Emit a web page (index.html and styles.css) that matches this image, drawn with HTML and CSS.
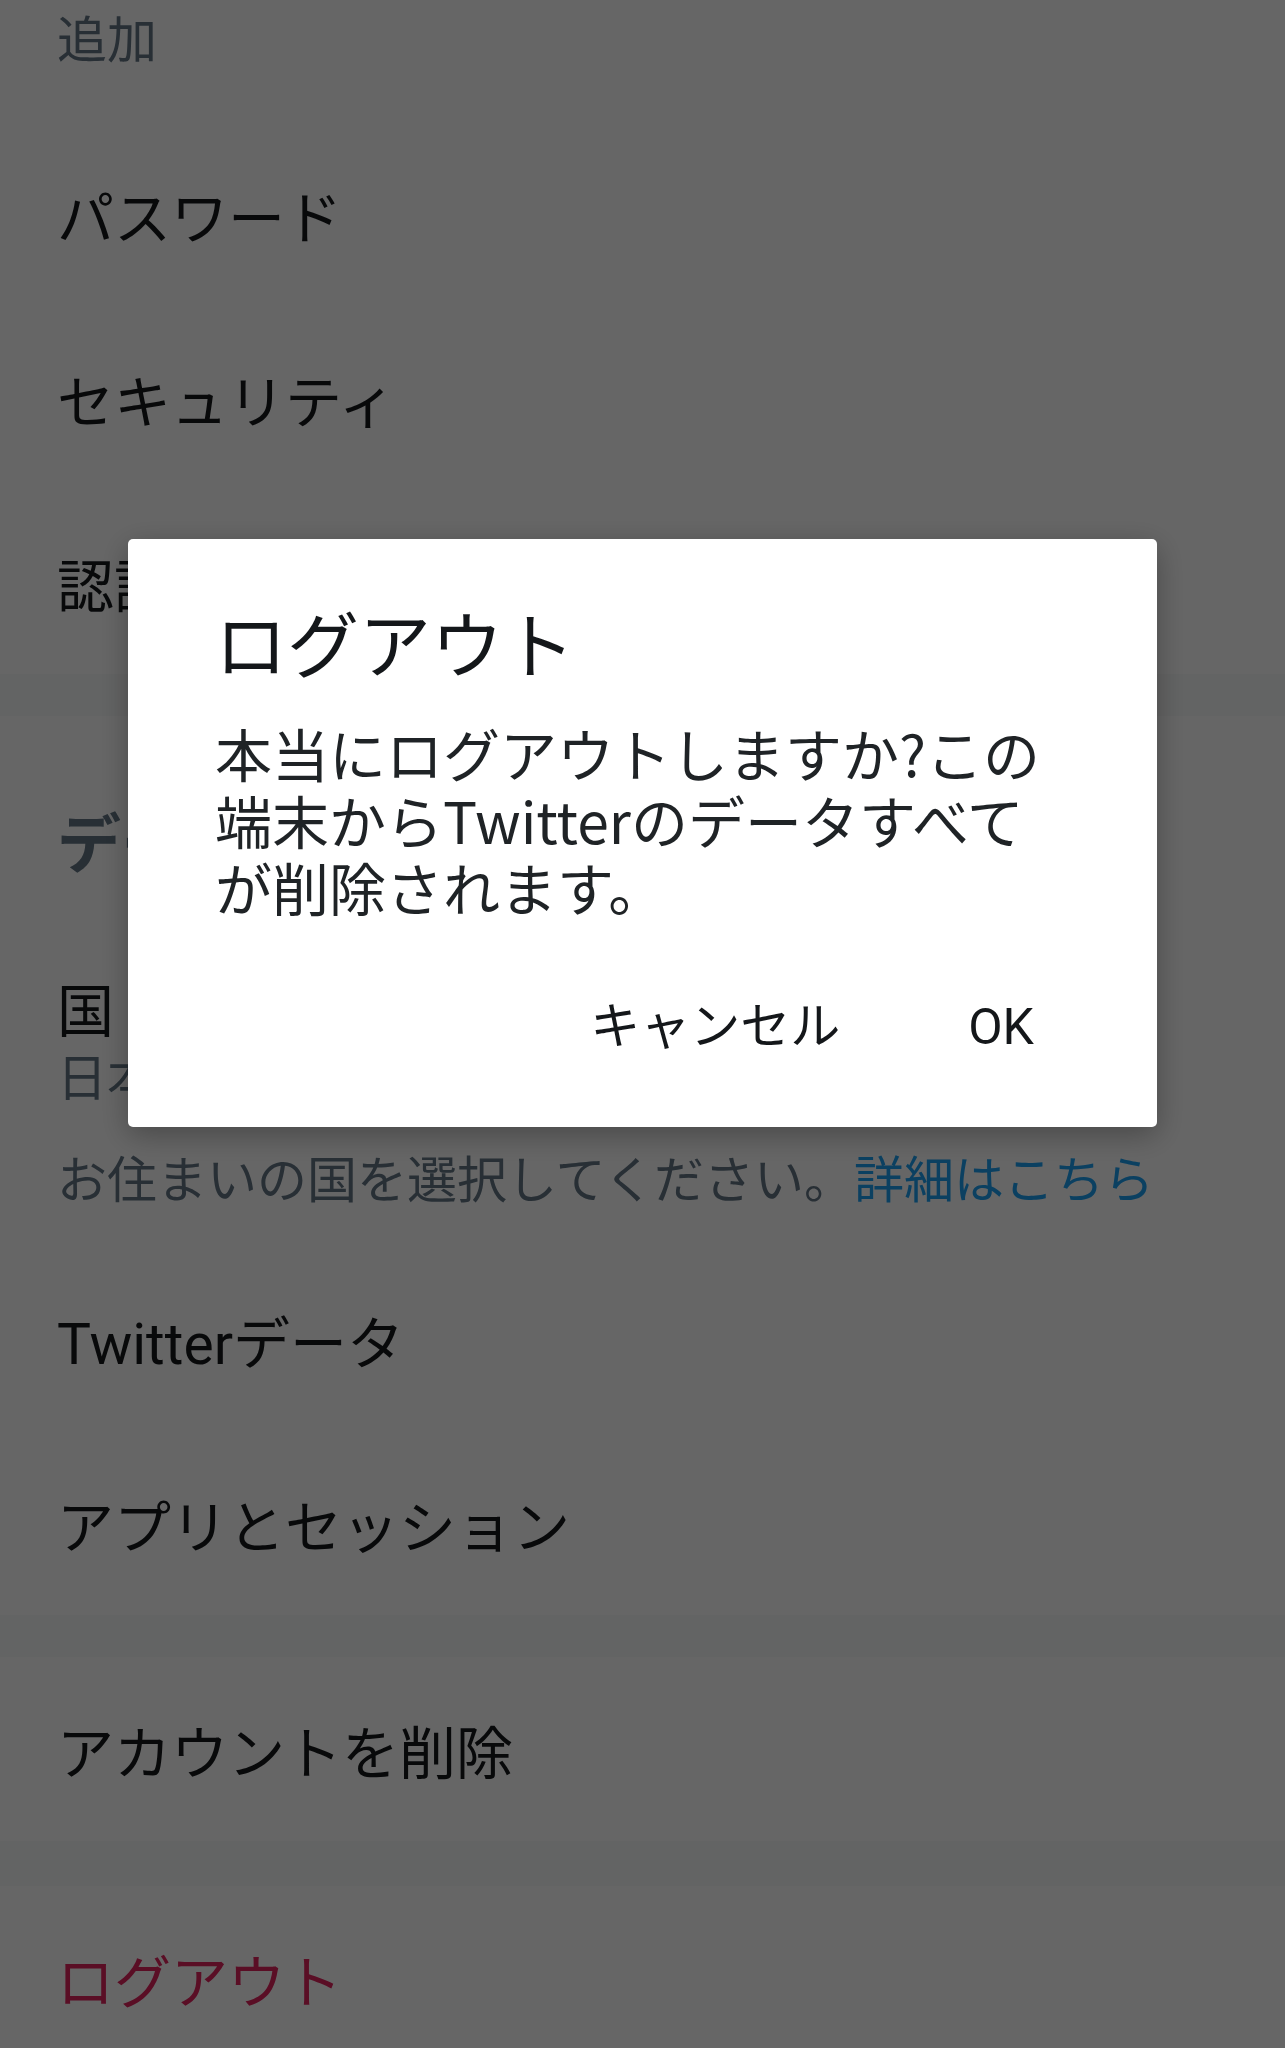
FILE: index.html
```html
<!DOCTYPE html>
<html lang="ja">

<head>
    <meta charset="UTF-8" />
    <meta name="viewport" content="width=device-width, initial-scale=1.0" />
    <title>アカウント</title>
    <link rel="stylesheet" href="styles.css">
</head>

<body>
    <div class="settings">
        <div class="row row-tail"><div class="sub">追加</div></div>
        <div class="row">パスワード</div>
        <div class="row">セキュリティ</div>
        <div class="row">認証済みアカウント</div>

        <div class="divider"></div>
        <h2 class="section">データと許可</h2>

        <div class="row row-two">
            <div class="title">国</div>
            <div class="sub">日本</div>
        </div>
        <p class="note">お住まいの国を選択してください。<a href="#">詳細はこちら</a></p>
        <div class="row">Twitterデータ</div>
        <div class="row">アプリとセッション</div>

        <div class="divider"></div>
        <div class="row">アカウントを削除</div>

        <div class="divider divider-last"></div>
        <div class="row danger">ログアウト</div>
    </div>

    <div class="overlay">
        <div class="dialog">
            <h1>ログアウト</h1>
            <p>本当にログアウトしますか?この端末からTwitterのデータすべてが削除されます。</p>
            <div class="actions">
                <button>キャンセル</button>
                <button>OK</button>
            </div>
        </div>
    </div>
</body>

</html>
```

FILE: styles.css
```css
* {
    box-sizing: border-box;
    margin: 0;
    padding: 0;
}

body {
    font-family: Roboto, "Noto Sans CJK JP", sans-serif;
    background-color: #fff;
    color: #14171a;
    height: 100vh;
    overflow: hidden;
}

.row {
    padding: 64px 57px 52px;
    font-size: 57px;
    line-height: 68px;
}

.row-tail {
    padding-top: 11px;
    padding-bottom: 51px;
}

.row-two {
    padding-bottom: 37px;
}

.sub {
    font-size: 50px;
    line-height: 60px;
    color: #657786;
}

.row-two .sub {
    margin-top: 2px;
}

.divider {
    height: 42px;
    background-color: #f8f9fa;
}

.divider-last {
    height: 45px;
}

.section {
    padding: 91px 57px 31px;
    font-size: 64px;
    line-height: 77px;
    font-weight: bold;
    color: #657786;
}

.note {
    padding: 5px 57px 36px;
    font-size: 50px;
    line-height: 60px;
    color: #657786;
}

.note a {
    color: #1da1f2;
    text-decoration: none;
}

.danger {
    color: #e0245e;
}

.overlay {
    position: fixed;
    top: 0;
    left: 0;
    width: 100%;
    height: 100%;
    background-color: rgba(0, 0, 0, 0.6);
    display: flex;
    justify-content: center;
    align-items: flex-start;
    padding-top: 539px;
}

.dialog {
    width: 1029px;
    background-color: #fff;
    border-radius: 5px;
    padding: 59px 110px 50px 87px;
    box-shadow: 0 8px 30px rgba(0, 0, 0, 0.3);
    font-family: "Noto Sans CJK JP", sans-serif;
}

.dialog h1 {
    font-size: 72px;
    line-height: 86px;
    font-weight: normal;
    margin-bottom: 35px;
}

.dialog p {
    font-size: 57px;
    line-height: 67px;
    color: #1f2326;
}

.actions {
    display: flex;
    justify-content: flex-end;
    gap: 128px;
    margin-top: 57px;
    padding-right: 13px;
}

.actions button {
    font-family: Roboto, "Noto Sans CJK JP", sans-serif;
    font-size: 50px;
    line-height: 50px;
    padding: 25px 0;
    border: none;
    background: none;
    color: #14171a;
    cursor: pointer;
}
```
